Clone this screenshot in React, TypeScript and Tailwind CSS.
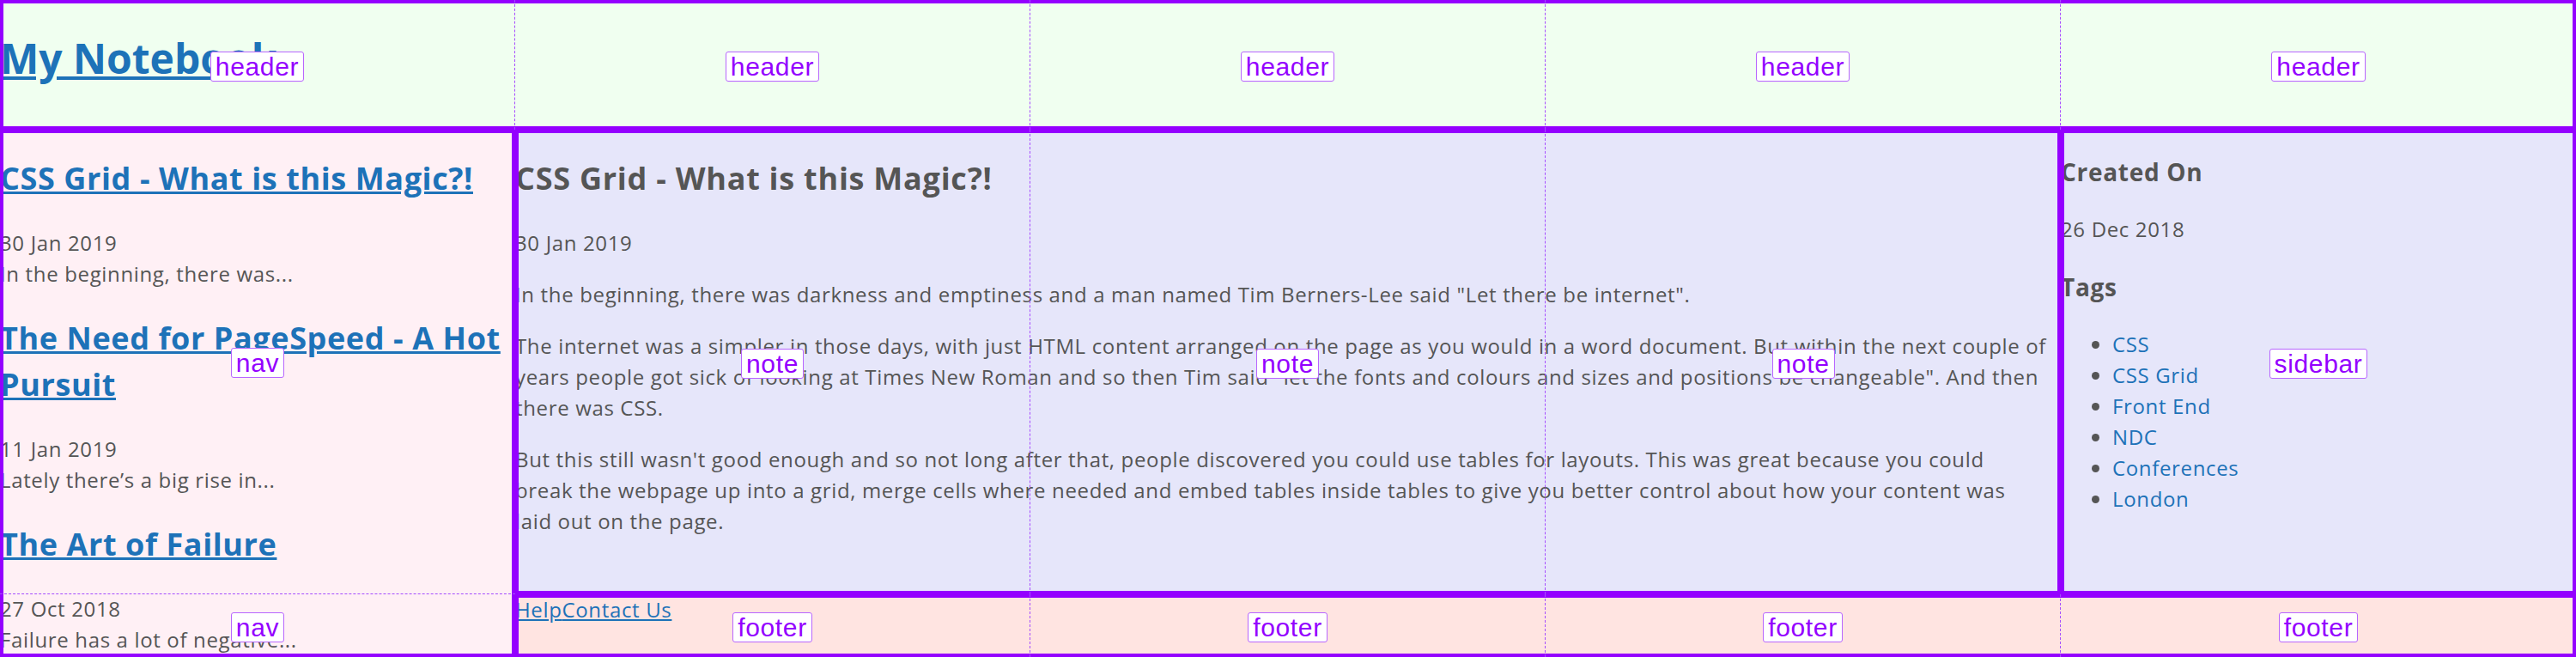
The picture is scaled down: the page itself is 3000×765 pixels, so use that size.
const areas = [
  ["header", "header", "header", "header", "header"],
  ["nav", "note", "note", "note", "sidebar"],
  ["nav", "footer", "footer", "footer", "footer"],
];

const notes = [
  { title: ["CSS Grid - What is this Magic?!"], date: "30 Jan 2019", excerpt: "In the beginning, there was..." },
  { title: ["The Need for PageSpeed - A Hot", "Pursuit"], date: "11 Jan 2019", excerpt: "Lately there\u2019s a big rise in..." },
  { title: ["The Art of Failure"], date: "27 Oct 2018", excerpt: "Failure has a lot of negative..." },
];

const tags = ["CSS", "CSS Grid", "Front End", "NDC", "Conferences", "London"];

const paragraphs = [
  ['In the beginning, there was darkness and emptiness and a man named Tim Berners-Lee said "Let there be internet".'],
  [
    "The internet was a simpler in those days, with just HTML content arranged on the page as you would in a word document. But within the next couple of",
    'years people got sick of looking at Times New Roman and so then Tim said "let the fonts and colours and sizes and positions be changeable". And then',
    "there was CSS.",
  ],
  [
    "But this still wasn't good enough and so not long after that, people discovered you could use tables for layouts. This was great because you could",
    "break the webpage up into a grid, merge cells where needed and embed tables inside tables to give you better control about how your content was",
    "laid out on the page.",
  ],
];

function Label({ name }: { name: string }) {
  return (
    <span className="mt-[3px] rounded-[3px] border border-[#b866ff] bg-white px-[5px] font-['Liberation_Sans',Arial,sans-serif] text-[30px] leading-[33px] text-[#9400ff]">
      {name}
    </span>
  );
}

// grid inspector overlay: area outlines, dashed inner lines, area name labels
function GridOverlay() {
  return (
    <div className="pointer-events-none absolute inset-0 grid grid-cols-5 grid-rows-[151px_541px_73px]">
      <div className="col-span-5 col-start-1 row-start-1 border-4 border-[#9400ff]" />
      <div className="col-start-1 row-span-2 row-start-2 border-4 border-[#9400ff]" />
      <div className="col-span-3 col-start-2 row-start-2 border-4 border-[#9400ff]" />
      <div className="col-start-5 row-start-2 border-4 border-[#9400ff]" />
      <div className="col-span-4 col-start-2 row-start-3 border-4 border-[#9400ff]" />
      {areas.map((row, r) =>
        row.map((name, c) => {
          const right = c < 4 && row[c + 1] === name;
          const below = r < 2 && areas[r + 1][c] === name;
          return (
            <div
              key={`${r}-${c}`}
              style={{ gridRow: r + 1, gridColumn: c + 1 }}
              className={`flex items-center justify-center ${right ? "border-r border-r-[#a64dff] [border-right-style:dashed]" : ""} ${below ? "border-b border-b-[#a64dff] [border-bottom-style:dashed]" : ""}`}
            >
              <Label name={name} />
            </div>
          );
        })
      )}
    </div>
  );
}

export default function App() {
  return (
    <div className="relative h-[765px] w-[3000px] overflow-hidden font-['Open_Sans',sans-serif] text-[24px] leading-[36px] tracking-[0.65px] text-[#555]">
      <div className="grid h-full grid-cols-5 grid-rows-[151px_541px_73px]">
        <header className="col-span-5 bg-[#f0fff0]">
          <h1 className="my-[32px] text-[48px] font-bold leading-[72px] tracking-normal">
            <a href="#" className="text-[#1d72b8] underline">My Notebook</a>
          </h1>
        </header>

        <nav className="row-span-2 overflow-hidden bg-[#fff0f5]">
          {notes.map((n) => (
            <div key={n.date}>
              <h2 className="my-[30px] whitespace-nowrap text-[36px] font-bold leading-[54px] tracking-[0.6px]">
                <a href="#" className="text-[#1d72b8] underline">
                  {n.title.map((t, i) => (
                    <span key={t}>
                      {i > 0 && <br />}
                      {t}
                    </span>
                  ))}
                </a>
              </h2>
              <p>{n.date}</p>
              <p>{n.excerpt}</p>
            </div>
          ))}
        </nav>

        <main className="col-span-3 overflow-hidden bg-[#e6e6fa]">
          <h2 className="my-[30px] text-[36px] font-bold leading-[54px] tracking-[0.75px]">CSS Grid - What is this Magic?!</h2>
          <p className="my-[24px]">30 Jan 2019</p>
          {paragraphs.map((lines) => (
            <p key={lines[0]} className="my-[24px] whitespace-nowrap">
              {lines.map((l, i) => (
                <span key={l}>
                  {i > 0 && <br />}
                  {l}
                </span>
              ))}
            </p>
          ))}
        </main>

        <aside className="overflow-hidden bg-[#e6e6fa]">
          <h3 className="my-[28px] text-[28px] font-bold leading-[42px] tracking-[0.7px]">Created On</h3>
          <p className="my-[24px]">26 Dec 2018</p>
          <h3 className="my-[28px] text-[28px] font-bold leading-[42px] tracking-[0.7px]">Tags</h3>
          <ul className="my-[24px] list-disc pl-[60px]">
            {tags.map((t) => (
              <li key={t}>
                <a href="#" className="text-[#1d72b8]">{t}</a>
              </li>
            ))}
          </ul>
        </aside>

        <footer className="col-span-4 bg-[#ffe4e1]">
          <a href="#" className="text-[#1d72b8] underline">Help</a>
          <a href="#" className="text-[#1d72b8] underline">Contact Us</a>
        </footer>
      </div>
      <GridOverlay />
    </div>
  );
}
